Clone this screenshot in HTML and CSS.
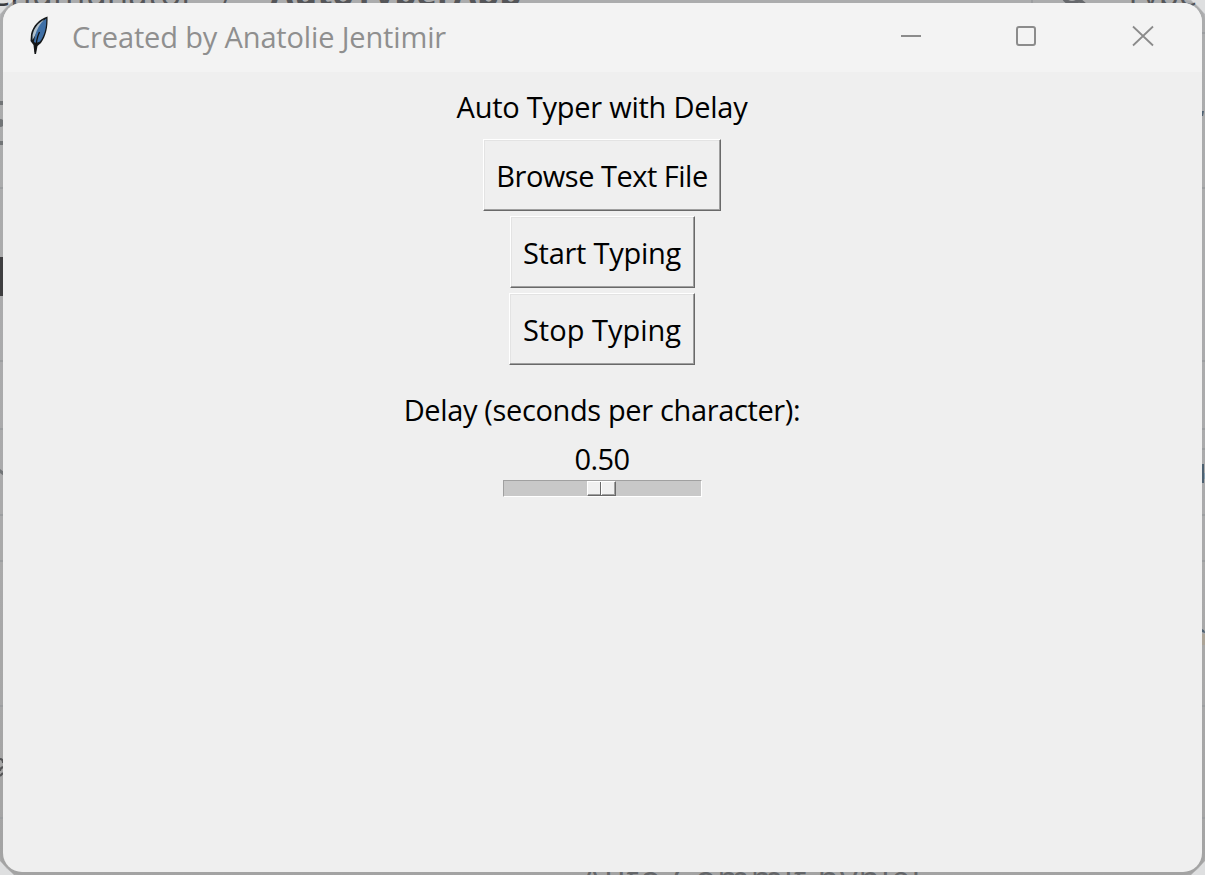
FILE: index.html
```html
<!DOCTYPE html>
<html lang="en">
<head>
<meta charset="utf-8">
<title>Created by Anatolie Jentimir</title>
<link rel="stylesheet" href="styles.css">
</head>
<body>
<div class="desktop">
  <svg class="backdrop" width="1205" height="875" viewBox="0 0 1205 875" aria-hidden="true">
    <path fill="#dedfe0" d="M0 0H14L0 14ZM1205 0H1191L1205 14ZM0 875V861L14 875ZM1205 875V861L1191 875Z"/>
    <g stroke="#a0a2a5" stroke-width="2">
      <path d="M0 188H1205M0 361H1205M0 429H1205M0 515H1205M0 561H1205M0 706H1205M0 818H1205M1140 449H1205M1200 33H1205M1032 0V4"/>
    </g>
    <path fill="#64676b" d="M0 101H4V105H0ZM0 119Q4 119 4 123Q4 127 0 127ZM0 141H4V145H0ZM0 469L4 472V476L0 473Z"/>
    <path d="M0 759Q3 759 3 763M3 767Q0 768 0 771M0 776L3 773" fill="none" stroke="#38393b" stroke-width="2"/>
    <path fill="#304b62" d="M1202 111H1204L1203 116H1202ZM1202 464H1204V483H1202ZM1202 629Q1205 630 1205 633L1202 632Z"/>
    <path fill="#83a5bd" d="M1204 473H1205V479H1204Z"/>
    <path fill="#b7ab98" d="M1202 634H1205V645H1202Z"/>
    <circle cx="1072" cy="-6" r="9" fill="none" stroke="#54575c" stroke-width="4"/>
    <path d="M1078 -1L1090 9" stroke="#54575c" stroke-width="4"/>
  </svg>
  <span class="behind behind-owner">Chumunator</span>
  <span class="behind behind-slash">/</span>
  <span class="behind behind-repo">AutoTyperApp</span>
  <span class="behind behind-search">Type</span>
  <span class="behind behind-commit">Auto Commit bypiel</span>

  <main class="window">
    <header class="titlebar">
      <svg class="feather" width="24" height="42" viewBox="0 0 24 42">
        <path d="M20.500 2.500C12 5 6 12 4 20L3.500 27L6.500 31L7.500 40L9 40L10.500 32L14 29C19 22 21 13 20.500 2.500Z" fill="#141719"/>
        <path d="M17 5.500C11 9 7 14 5.500 21L5.500 26L9 20Z" fill="#b0c0cc"/>
        <path d="M19.300 4.500C13 8.500 8 17 7 28L9 29L13 27.500C17.500 21.500 19.500 14 19.300 4.500Z" fill="#3f70a7"/>
        <path d="M12.500 18C10 23 9 27 8.300 38" fill="none" stroke="#111" stroke-width="1.300"/>
      </svg>
      <h1 class="title">Created by Anatolie Jentimir</h1>
      <svg class="controls" width="260" height="30" viewBox="0 0 260 30" fill="none" stroke="#8b8b8b" stroke-width="2">
        <path d="M5 15H25"/>
        <rect x="121" y="6" width="18" height="18" rx="2"/>
        <path d="M237 5.500L257 24.500M257 5.500L237 24.500" stroke-width="1.800"/>
      </svg>
    </header>
    <section class="content">
      <p class="label heading">Auto Typer with Delay</p>
      <button class="button browse">Browse Text File</button>
      <button class="button start">Start Typing</button>
      <button class="button stop">Stop Typing</button>
      <p class="label delay">Delay (seconds per character):</p>
      <p class="label value">0.50</p>
      <div class="track"><div class="thumb"><i></i><i></i></div></div>
    </section>
  </main>
  <div class="edge-mark"></div>
</div>
</body>
</html>
```
FILE: styles.css
```css
* { box-sizing: border-box; }
body { margin: 0; overflow: hidden; font-family: "Open Sans", "Noto Sans", sans-serif; }
.desktop {
  position: relative;
  width: 1205px;
  height: 875px;
  padding: 3px;
  overflow: hidden;
  background: linear-gradient(#b5b6b8, #b4b4b5 60%, #aaa);
}
.backdrop { position: absolute; inset: 0; }
.behind { position: absolute; white-space: nowrap; line-height: 40px; color: #3a3c40; font-size: 29px; }
.behind-owner { left: -12px; top: -27px; font-size: 35px; }
.behind-slash { left: 222px; top: -25px; }
.behind-repo { left: 270px; top: -27px; font-size: 35px; font-weight: 700; }
.behind-search { left: 1124px; top: -26px; font-size: 33px; }
.behind-commit { left: 581px; top: 858px; font-size: 35px; letter-spacing: 1px; color: #505256; }
.edge-mark { position: absolute; left: 0; top: 257px; width: 3px; height: 39px; background: #3e3e40; }

.window {
  position: relative;
  height: 869px;
  border-radius: 19px;
  overflow: hidden;
  background: #efefef;
  box-shadow: 0 0 0 3px rgba(150, 150, 150, .3);
}
.titlebar {
  display: flex;
  align-items: center;
  height: 69px;
  padding: 0 46px 3px 24px;
  background: #f3f3f3;
}
.feather { flex: none; margin-top: -3px; }
.title {
  flex: 1;
  margin: 2px 0 0 21px;
  font-size: 29px;
  font-weight: 400;
  line-height: 40px;
  color: #8f8f8f;
  white-space: nowrap;
  letter-spacing: -.15px;
}
.controls { flex: none; }
.content {
  display: flex;
  flex-direction: column;
  align-items: center;
  padding: 15px 1px 0 0;
}
.label, .button { color: #000; font: 400 29px/40px "Open Sans", "Noto Sans", sans-serif; white-space: nowrap; }
.label { margin: 0; }
.button {
  height: 72px;
  margin: 0 0 5px;
  padding: 2px 0 0;
  border: 1px solid;
  border-color: #fff #696969 #696969 #fff;
  border-radius: 0;
  background: #efefef;
  box-shadow: inset -1px -1px #a0a0a0, inset 1px 1px #e3e3e3;
}
.label.heading { margin-bottom: 12px; letter-spacing: -.25px; }
.browse { width: 238px; letter-spacing: -.5px; }
.start { width: 185px; letter-spacing: -.25px; }
.stop { width: 186px; letter-spacing: 0; }
.label.delay { margin-top: 20px; letter-spacing: -.36px; }
.label.value { margin: 9px 0 1px; letter-spacing: -.6px; }
.track {
  width: 199px;
  height: 17px;
  padding-left: 83px;
  border: 1px solid;
  border-color: #a0a0a0 #fff #fff #a0a0a0;
  background: #c8c8c8;
}
.thumb {
  display: flex;
  width: 29px;
  height: 15px;
  border: 1px solid;
  border-color: #fff #696969 #696969 #fff;
  box-shadow: inset -1px -1px #a0a0a0;
  background: #f0f0f0;
}
.thumb i { width: 13px; border-right: 1px solid #696969; }
.thumb i + i { border: 0; border-left: 1px solid #fff; }
```
